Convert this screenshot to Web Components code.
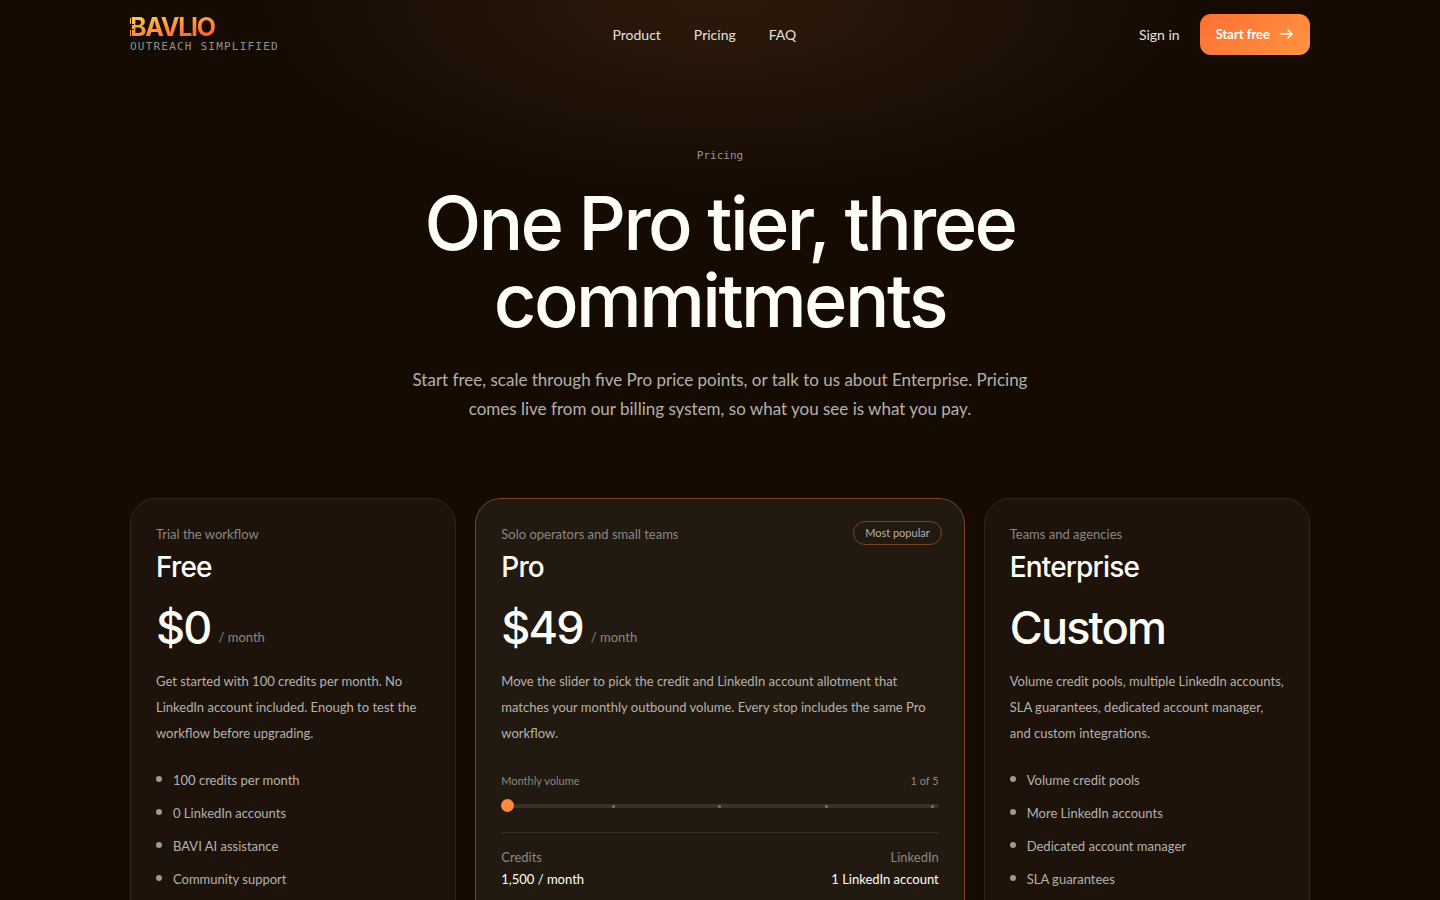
<!DOCTYPE html>
<html lang="en">
<head>
<meta charset="utf-8">
<title>Bavlio – Pricing</title>
<style>
:root{--ink:#fffef9;--soft:#b5b1ac;--mute:#8b8783;--line:#2d2620;--accent:#ff8a3d}
body{margin:0;min-height:100vh;color:var(--ink);font-family:Lato,"Noto Sans",sans-serif;
background:#150b03 radial-gradient(ellipse 480px 200px at 50% 0,#2c190b 0,#261509 33%,#1d1006 66%,#150b03 100%) no-repeat}
</style>
</head>
<body>
<pricing-page></pricing-page>
<script>
const define=(name,html,setup)=>customElements.define(name,class extends HTMLElement{
  constructor(){
    super();
    const t=document.createElement('template');
    t.innerHTML=html;
    this.attachShadow({mode:'open'}).append(t.content.cloneNode(true));
  }
  connectedCallback(){if(setup)setup(this,this.shadowRoot)}
});

define('brand-logo',`<style>
:host{display:block}
a{display:block;color:inherit;text-decoration:none}
.word{display:block;position:relative;width:max-content;font:700 25px/26px Inter,sans-serif;letter-spacing:-.05em;background:linear-gradient(170deg,#ffc24a 15%,#ff8a3d 55%,#ff5a2c 90%);-webkit-background-clip:text;background-clip:text;color:transparent}
svg{position:absolute;left:0;top:0}
small{display:block;font:11px/14px "DejaVu Sans Mono",monospace;letter-spacing:.11em;color:#94908b}
</style>
<a href="#home"><span class="word">BAVLIO<svg width="12" height="26" aria-hidden="true"><path d="M1 4h1v18H1zM1 10h3v1H1zM1 15h3v1H1z" fill="#150b03"/><path d="M0 4h1v6H0z" fill="#ffb347"/><path d="M0 16h1v6H0z" fill="#ff9440"/></svg></span><small>OUTREACH SIMPLIFIED</small></a>`);

define('site-header',`<style>
:host{display:block}
header{display:flex;align-items:center;justify-content:space-between;height:68px;font-size:14px}
nav{display:flex;gap:33px;padding-right:9px}
a{color:#e6e0d8;text-decoration:none}
.side{display:flex;align-items:center;justify-content:flex-end;gap:20px}
button{display:flex;align-items:center;gap:9px;height:41px;padding:0 16px;border:0;border-radius:11px;background:linear-gradient(135deg,#ff6f35,#ff9440);color:var(--ink);font:700 13px Lato,sans-serif}
</style>
<header><brand-logo></brand-logo>
<nav aria-label="Main"><a href="#product">Product</a><a href="#pricing">Pricing</a><a href="#faq">FAQ</a></nav>
<div class="side"><a href="#signin">Sign in</a><button type="button">Start free<svg width="15" height="14" viewBox="0 0 15 14" fill="none" stroke="currentColor" stroke-width="1.500" stroke-linecap="round" stroke-linejoin="round" aria-hidden="true"><path d="M2 7h11M9 3l4 4-4 4"/></svg></button></div></header>`);

define('page-hero',`<style>
:host{display:block;text-align:center;padding:81px 0 75px}
.eyebrow{margin:0;font:11px/14px "DejaVu Sans Mono",monospace;color:#9a958f}
h1{max-width:720px;margin:22px auto 0;font:500 74px/77px Inter,sans-serif;letter-spacing:-.035em}
.lead{max-width:640px;margin:26px auto 0;font-size:17px;line-height:29px;color:var(--soft)}
</style>
<p class="eyebrow"><slot name="eyebrow"></slot></p><h1><slot name="title"></slot></h1><p class="lead"><slot></slot></p>`);

define('plan-card',`<style>
:host{display:block;position:relative;box-sizing:border-box;padding:25px 25px 80px;border:1px solid var(--line);border-radius:26px;background:#1d130b;font-size:13px}
:host([featured]){background:#221910;border-color:#7b441f}
.tag{margin:0;line-height:20px;color:var(--mute)}
h2{margin:7px 0 0;font:500 28px/32px Inter,sans-serif;letter-spacing:-.03em}
.price{display:flex;align-items:flex-end;gap:8px;margin:18px 0 0;color:var(--mute)}
strong{font:500 45px/54px Inter,sans-serif;letter-spacing:-.04em;color:var(--ink)}
.per{line-height:20px;padding-bottom:8px}
.about{margin:13px 0 22px;line-height:26px;color:var(--soft)}
.badge{position:absolute;right:22px;top:22px;padding:0 11px;border:1px solid #7b441f;border-radius:12px;font-size:11px;line-height:22px;color:var(--soft)}
.badge[hidden]{display:none}
</style>
<span class="badge"></span><p class="tag"></p><h2></h2><p class="price"><strong></strong><span class="per"></span></p><p class="about"></p><slot></slot>`,
(host,root)=>{
  const put=(s,a)=>root.querySelector(s).textContent=host.getAttribute(a)||'';
  put('.tag','tag');put('h2','name');put('strong','price');put('.per','per');put('.about','about');put('.badge','badge');
  root.querySelector('.badge').hidden=!host.hasAttribute('badge');
});

define('feature-list',`<style>
:host{display:block;color:var(--soft)}
ul{margin:0;padding:0;list-style:none;display:grid;gap:9px}
li{display:flex;align-items:center;gap:11px;line-height:24px}
li::before{content:"";width:6px;height:6px;border-radius:50%;background:#9d9994;margin-top:-2px}
</style><ul></ul>`,(host,root)=>{
  const ul=root.querySelector('ul');
  ul.replaceChildren(...host.getAttribute('items').split('|').map(x=>{const li=document.createElement('li');li.textContent=x;return li}));
});

define('volume-picker',`<style>
:host{display:block}
.row{display:flex;justify-content:space-between}
.head{font-size:11px;line-height:16px;padding-top:5px;color:var(--mute)}
.slider{position:relative;height:14px;margin:10px 0 19px}
input{position:relative;display:block;-webkit-appearance:none;appearance:none;width:100%;height:14px;margin:0;background:none}
input::-webkit-slider-runnable-track{height:4px;border-radius:2px;background:#39312a}
input::-webkit-slider-thumb{-webkit-appearance:none;width:13px;height:13px;margin-top:-5px;border-radius:50%;background:var(--accent)}
.ticks{position:absolute;inset:0;display:flex;align-items:center;justify-content:space-between;padding:0 5px;pointer-events:none}
.ticks i{width:3px;height:3px;border-radius:50%;background:#7b746d}
.ticks i:first-child{visibility:hidden}
dl{margin:0;padding-top:13px;border-top:1px solid #352c24}
dl div:last-child{text-align:right}
dt{line-height:22px;color:var(--mute)}
dd{margin:0;line-height:22px;color:var(--ink)}
</style>
<div class="row head"><label for="volume">Monthly volume</label><output for="volume">1 of 5</output></div>
<div class="slider"><input id="volume" type="range" min="1" max="5" value="1"><div class="ticks"><i></i><i></i><i></i><i></i><i></i></div></div>
<dl class="row"><div><dt>Credits</dt><dd>1,500 / month</dd></div><div><dt>LinkedIn</dt><dd>1 LinkedIn account</dd></div></dl>`,
(host,root)=>root.querySelector('input').addEventListener('input',e=>root.querySelector('output').textContent=e.target.value+' of 5'));

define('pricing-page',`<style>
:host{display:block;box-sizing:border-box;max-width:1180px;margin:0 auto}
.plans{display:grid;grid-template-columns:2fr 3fr 2fr;gap:19px}
</style>
<site-header></site-header>
<main><page-hero><span slot="eyebrow">Pricing</span><span slot="title">One Pro tier, three commitments</span>Start free, scale through five Pro price points, or talk to us about Enterprise. Pricing comes live from our billing system, so what you see is what you pay.</page-hero>
<div class="plans">
<plan-card tag="Trial the workflow" name="Free" price="$0" per="/ month" about="Get started with 100 credits per month. No LinkedIn account included. Enough to test the workflow before upgrading."><feature-list items="100 credits per month|0 LinkedIn accounts|BAVI AI assistance|Community support"></feature-list></plan-card>
<plan-card featured badge="Most popular" tag="Solo operators and small teams" name="Pro" price="$49" per="/ month" about="Move the slider to pick the credit and LinkedIn account allotment that matches your monthly outbound volume. Every stop includes the same Pro workflow."><volume-picker></volume-picker></plan-card>
<plan-card tag="Teams and agencies" name="Enterprise" price="Custom" about="Volume credit pools, multiple LinkedIn accounts, SLA guarantees, dedicated account manager, and custom integrations."><feature-list items="Volume credit pools|More LinkedIn accounts|Dedicated account manager|SLA guarantees"></feature-list></plan-card>
</div></main>`);
</script>
</body>
</html>
